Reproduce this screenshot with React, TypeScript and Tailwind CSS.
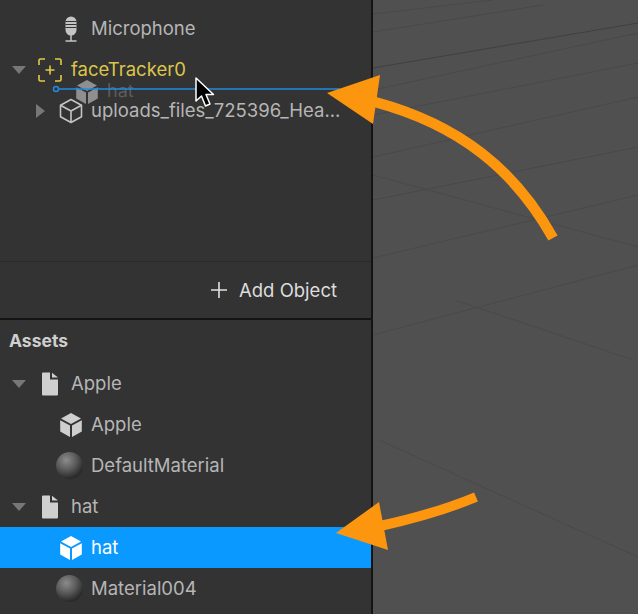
import type { ReactNode } from 'react'

function Triangle({ open }: { open?: boolean }) {
  return (
    <svg width="14" height="14" viewBox="0 0 14 14" className="text-[#777777]">
      {open ? <path d="M0 3h14L7 11z" fill="currentColor" /> : <path d="M3 0l9 7-9 7z" fill="currentColor" />}
    </svg>
  )
}

function MicIcon() {
  return (
    <svg width="24" height="28" viewBox="0 0 24 28" fill="none">
      <path d="M6.500 7a5.500 5.500 0 0 1 11 0v8a5.500 5.500 0 0 1-11 0z" fill="#c4c4c4" />
      <path d="M6.500 6.500h11M6.500 9.500h11M6.500 12.500h11" stroke="#333333" strokeWidth="1.200" />
      <path d="M12 20v6M6.500 26h11" stroke="#c4c4c4" strokeWidth="1.500" />
    </svg>
  )
}

function TrackerIcon() {
  return (
    <svg width="24" height="24" viewBox="0 0 24 24" fill="none" stroke="#e3cb45" strokeWidth="1.600">
      <path d="M1 7V2.500A1.500 1.500 0 0 1 2.500 1H7M17 1h4.500A1.500 1.500 0 0 1 23 2.500V7M23 17v4.500a1.500 1.500 0 0 1-1.500 1.500H17M7 23H2.500A1.500 1.500 0 0 1 1 21.500V17" />
      <path d="M12 7.500v9M7.500 12h9" />
    </svg>
  )
}

function CubeOutline() {
  return (
    <svg width="24" height="26" viewBox="0 0 24 26" fill="none" stroke="#c4c4c4" strokeWidth="1.600" strokeLinejoin="round">
      <path d="M12 1.500l10.500 5.700v11.600L12 24.500 1.500 18.800V7.200z" />
      <path d="M1.500 7.200L12 13l10.500-5.800M12 13v11.500" />
    </svg>
  )
}

function CubeSolid({ color = '#cfcfcf' }: { color?: string }) {
  return (
    <svg width="24" height="26" viewBox="0 0 24 26" fill={color}>
      <path d="M12 1l10 5.400-10 5.500L2 6.400z" />
      <path d="M1.200 8.200l9.800 5.400V25l-9.800-5.400z" />
      <path d="M22.800 8.200L13 13.600V25l9.800-5.400z" />
    </svg>
  )
}

function FileIcon() {
  return (
    <svg width="18" height="24" viewBox="0 0 18 24" fill="#d0d0d0">
      <path d="M1 1.500A1 1 0 0 1 2 .5h7v7h8v15a1 1 0 0 1-1 1H2a1 1 0 0 1-1-1z" />
      <path d="M11 .8L17 5.500h-6z" />
    </svg>
  )
}

function Sphere() {
  return (
    <div className="-ml-[3px] h-[27px] w-[27px] shrink-0 rounded-full bg-[radial-gradient(circle_at_38%_30%,#8c8c8c,#5a5a5a_40%,#2c2c2c_72%,#181818)]" />
  )
}

function Row({
  depth = 0,
  arrow,
  icon,
  label,
  labelClass = 'text-[#b6b6b6]',
  selected,
}: {
  depth?: number
  arrow?: 'open' | 'closed'
  icon: ReactNode
  label: string
  labelClass?: string
  selected?: boolean
}) {
  return (
    <div className={`flex h-[41px] items-center ${depth === 1 ? 'pl-[31px]' : 'pl-[10px]'} ${selected ? 'bg-[#0a99ff]' : ''}`}>
      <div className="mr-[10px] flex w-[18px] justify-center">{arrow && <Triangle open={arrow === 'open'} />}</div>
      <div className={`flex w-6 justify-center ${depth === 1 ? 'mr-[8px]' : 'mr-[9px]'}`}>{icon}</div>
      <span className={`whitespace-nowrap text-[18.5px] leading-none ${labelClass}`}>{label}</span>
    </div>
  )
}

function Grid() {
  const lines = [
    'M0 14L120 0', 'M0 32L170 5', 'M0 68L265 23', 'M0 90L265 33', 'M0 115L265 63',
    'M0 157L265 97', 'M0 200L265 147', 'M0 258L265 195', 'M0 335L265 265',
    'M0 175L265 247', 'M82 300L260 360', 'M6 440L265 557',
  ]
  return (
    <svg width="265" height="614" viewBox="0 0 265 614" fill="none" className="absolute inset-0">
      {lines.map((d, i) => (
        <path key={i} d={d} stroke={i === 2 ? '#404040' : '#494949'} strokeWidth="1" />
      ))}
    </svg>
  )
}

export default function App() {
  return (
    <div className="relative flex h-[614px] w-[638px] overflow-hidden bg-[#505050] font-['Inter',sans-serif]">
      <aside className="flex w-[373px] shrink-0 flex-col border-r-2 border-[#141414] bg-[#333333]">
        <div className="h-[261px] pt-2">
          <Row depth={1} icon={<MicIcon />} label="Microphone" />
          <Row arrow="open" icon={<TrackerIcon />} label="faceTracker0" labelClass="text-[#dcc64a]" />
          <Row depth={1} arrow="closed" icon={<CubeOutline />} label="uploads_files_725396_Hea..." />
        </div>
        <div className="flex h-[57px] items-center justify-end gap-[11px] border-t border-[#2b2b2b] pr-[34px]">
          <svg width="18" height="18" viewBox="0 0 18 18" stroke="#e2e2e2" strokeWidth="1.600">
            <path d="M9 1v16M1 9h16" />
          </svg>
          <span className="text-[18.5px] leading-none text-[#dddddd]">Add Object</span>
        </div>
        <div className="flex-1 border-t-2 border-[#141414]">
          <div className="flex h-[43px] items-center pl-[9px] text-[17.5px] font-bold text-[#cfcfcf]">Assets</div>
          <Row arrow="open" icon={<FileIcon />} label="Apple" />
          <Row depth={1} icon={<CubeSolid />} label="Apple" />
          <Row depth={1} icon={<Sphere />} label="DefaultMaterial" />
          <Row arrow="open" icon={<FileIcon />} label="hat" />
          <Row depth={1} icon={<CubeSolid color="#ffffff" />} label="hat" labelClass="text-white" selected />
          <Row depth={1} icon={<Sphere />} label="Material004" />
        </div>
      </aside>
      <main className="relative flex-1">
        <Grid />
      </main>

      {/* drag ghost */}
      <div className="absolute left-[75px] top-[79px] flex items-center gap-[8px]">
        <CubeSolid color="#8f8f8f" />
        <span className="mb-[3px] text-[18px] leading-none text-[#5c5c5c]">hat</span>
      </div>

      {/* drop line, cursor and the annotation arrows */}
      <svg width="638" height="614" viewBox="0 0 638 614" fill="none" className="absolute inset-0">
        <circle cx="56" cy="89" r="2.500" stroke="#1f8ce0" strokeWidth="1.500" />
        <path d="M59 89H340" stroke="#1f8ce0" strokeWidth="1.500" />
        <path d="M196 78v23l5.500-5 4 10 4.500-2-4-9.500h7.500z" fill="#000000" stroke="#ffffff" strokeWidth="1.500" strokeLinejoin="round" />
        <path d="M553 238C515 170 460 125 375 102" stroke="#fd960f" strokeWidth="10.500" />
        <path d="M327 93L380 75L373 124z" fill="#fd960f" />
        <path d="M476 497Q435 514 380 526" stroke="#fd960f" strokeWidth="10" />
        <path d="M336 533L379 502L388 550z" fill="#fd960f" />
      </svg>
    </div>
  )
}
